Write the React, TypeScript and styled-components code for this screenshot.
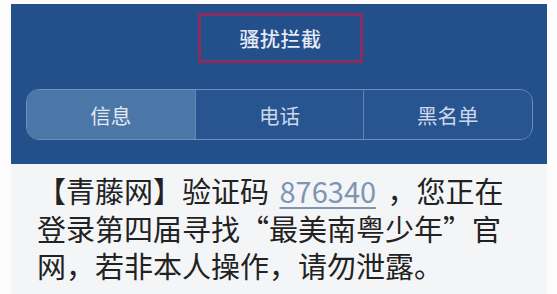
import { createGlobalStyle } from "styled-components";
import styled from "styled-components";

const GlobalStyle = createGlobalStyle`
  html, body {
    margin: 0;
    padding: 0;
    background: #fdfdfd;
  }
  body {
    font-family: "Noto Sans CJK SC", "Noto Sans", sans-serif;
  }
`;

const Page = styled.div`
  width: 557px;
  height: 294px;
  padding: 4px 10px 0 11px;
  box-sizing: border-box;
  overflow: hidden;
`;

const Header = styled.div`
  background: #234f8b;
  height: 160px;
  box-sizing: border-box;
  padding-top: 9px;
  display: flex;
  flex-direction: column;
  align-items: center;
`;

const TitleBox = styled.div`
  width: 165px;
  height: 50px;
  box-sizing: border-box;
  border: 3px solid #8a2c5f;
  display: flex;
  align-items: center;
  justify-content: center;
  color: #e3eaf5;
  font-size: 20px;
  font-weight: 500;
  letter-spacing: 0.5px;
  margin-left: 3px;
`;

const Segmented = styled.div`
  margin-top: 26px;
  width: 507px;
  height: 51px;
  box-sizing: border-box;
  border: 1.5px solid #6b8fbf;
  border-radius: 13px;
  display: grid;
  grid-template-columns: 1fr 1fr 1fr;
  overflow: hidden;
`;

const Segment = styled.div<{ $active?: boolean }>`
  display: flex;
  align-items: center;
  justify-content: center;
  font-size: 20.5px;
  color: ${(p) => (p.$active ? "#e2e9f3" : "#cdd9ea")};
  background: ${(p) => (p.$active ? "#4b77a8" : "#285490")};
  & + & {
    border-left: 1.5px solid #5f85b6;
  }
`;

const Message = styled.div`
  background: #f4f5f7;
  height: 130px;
  box-sizing: border-box;
  padding: 8px 0 0 26px;
  font-size: 29px;
  line-height: 37.5px;
  color: #222222;
  white-space: nowrap;
`;

const Code = styled.span`
  color: #7f95b4;
  margin: 0 5px 0 4px;
  text-decoration: underline;
  text-decoration-thickness: 1.5px;
  text-underline-offset: 4px;
`;

export default function App() {
  return (
    <>
      <GlobalStyle />
      <Page>
        <Header>
          <TitleBox>骚扰拦截</TitleBox>
          <Segmented>
            <Segment $active>信息</Segment>
            <Segment>电话</Segment>
            <Segment>黑名单</Segment>
          </Segmented>
        </Header>
        <Message>
          【青藤网】验证码 <Code>876340</Code> ，您正在
          <br />
          登录第四届寻找“最美南粤少年”官
          <br />
          网，若非本人操作，请勿泄露。
        </Message>
      </Page>
    </>
  );
}
